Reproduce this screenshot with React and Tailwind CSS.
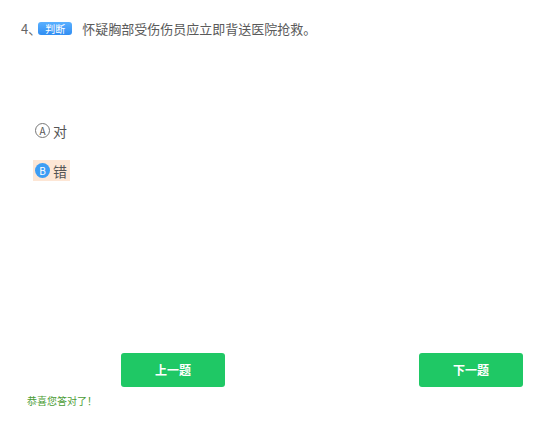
export default function App() {
  return (
    <div className="w-[557px] h-[438px] bg-white font-['Noto_Sans_CJK_SC','Noto_Sans',sans-serif] text-[#666] overflow-hidden">
      <div className="flex items-center h-[16px] mt-[20px] pl-[21px]">
        <span className="text-[13px] leading-none">4、</span>
        <span className="w-[34px] h-[13px] rounded-[3px] bg-gradient-to-b from-[#5ab0ff] to-[#2f8df2] text-white text-[10px] leading-[13px] text-center -ml-[3px]">
          判断
        </span>
        <span className="ml-[10px] text-[13px] leading-none text-[#5a5a5a]">怀疑胸部受伤伤员应立即背送医院抢救。</span>
      </div>

      <div className="mt-[84px] pl-[33px]">
        <div className="flex items-center h-[21px] px-[2px]">
          <span className="w-[15px] h-[15px] rounded-full border border-[#777] flex items-center justify-center text-[10px] leading-none text-[#555]">
            A
          </span>
          <span className="ml-[3px] text-[14px] leading-none text-[#555]">对</span>
        </div>
        <div className="mt-[19px] inline-flex items-center h-[21px] px-[2px] bg-[#fde6d5]">
          <span className="w-[15px] h-[15px] rounded-full bg-[#3d9df4] flex items-center justify-center text-[10px] leading-none text-white">
            B
          </span>
          <span className="ml-[3px] mr-[1px] text-[14px] leading-none text-[#555]">错</span>
        </div>
      </div>

      <div className="flex mt-[172px] pl-[121px] gap-[194px]">
        <button className="w-[104px] h-[34px] rounded-[3px] bg-[#1fc865] text-white text-[12px] font-bold">上一题</button>
        <button className="w-[104px] h-[34px] rounded-[3px] bg-[#1fc865] text-white text-[12px] font-bold">下一题</button>
      </div>

      <div className="mt-[9px] pl-[27px] text-[10px] leading-none text-[#4a9c34]">恭喜您答对了！</div>
    </div>
  )
}
